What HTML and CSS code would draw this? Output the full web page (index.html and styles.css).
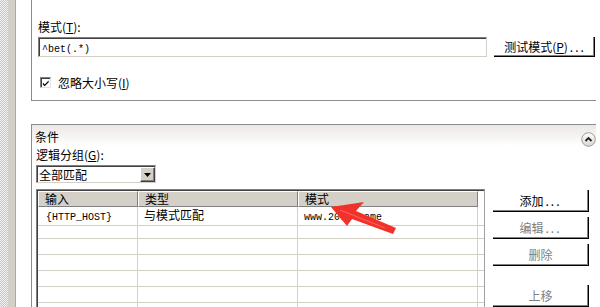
FILE: index.html
```html
<!DOCTYPE html>
<html lang="zh-CN">
<head>
    <meta charset="UTF-8">
    <title>编辑入站规则</title>
    <link rel="stylesheet" href="styles.css">
</head>
<body>
    <div class="screen">
        <div class="rail">
            <div class="checker"></div>
            <div class="bar"></div>
        </div>

        <div class="main">
            <div class="group top-group">
                <div class="label">模式(<u>T</u>):</div>
                <div class="pattern-row">
                    <div class="textbox"><span class="mono">^bet(.*)</span></div>
                    <button class="btn test-btn">测试模式(<u>P</u>)<span class="dots">...</span></button>
                </div>
                <div class="check-row">
                    <span class="checkbox">
                        <svg width="9" height="9" viewBox="0 0 9 9"><path d="M1 3.5 L3 5.5 L7.5 1 L7.5 3 L3 7.5 L1 5.5 Z" fill="#000"/></svg>
                    </span>
                    <span>忽略大小写(<u>I</u>)</span>
                </div>
            </div>

            <div class="group cond-group">
                <div class="group-head">
                    <span>条件</span>
                    <span class="collapse">
                        <svg width="15" height="15" viewBox="0 0 15 15">
                            <defs>
                                <linearGradient id="cg" x1="0" y1="0" x2="0" y2="1">
                                    <stop offset="0" stop-color="#ffffff"/>
                                    <stop offset="1" stop-color="#d8d4cf"/>
                                </linearGradient>
                            </defs>
                            <circle cx="7.5" cy="7.5" r="6.8" fill="url(#cg)" stroke="#a09c98" stroke-width="1"/>
                            <path d="M4.5 9 L7.5 6 L10.5 9" fill="none" stroke="#222" stroke-width="1.8"/>
                        </svg>
                    </span>
                </div>
                <div class="group-body">
                    <div class="label">逻辑分组(<u>G</u>):</div>
                    <div class="select">
                        <span class="select-text">全部匹配</span>
                        <span class="drop">
                            <svg width="7" height="4" viewBox="0 0 7 4"><path d="M0 0 H7 L3.5 4 Z" fill="#000"/></svg>
                        </span>
                    </div>

                    <div class="list-row">
                        <div class="listview">
                            <div class="lv-head">
                                <div class="lv-th">输入</div>
                                <div class="lv-th">类型</div>
                                <div class="lv-th">模式</div>
                                <div class="lv-th blank"></div>
                            </div>
                            <div class="lv-row">
                                <div class="lv-td"><span class="mono">{HTTP_HOST}</span></div>
                                <div class="lv-td">与模式匹配</div>
                                <div class="lv-td"><span class="mono">www.2008.name</span></div>
                                <div class="lv-td"></div>
                            </div>
                            <div class="lv-row"><div class="lv-td"></div><div class="lv-td"></div><div class="lv-td"></div><div class="lv-td"></div></div>
                            <div class="lv-row"><div class="lv-td"></div><div class="lv-td"></div><div class="lv-td"></div><div class="lv-td"></div></div>
                            <div class="lv-row"><div class="lv-td"></div><div class="lv-td"></div><div class="lv-td"></div><div class="lv-td"></div></div>
                            <div class="lv-row"><div class="lv-td"></div><div class="lv-td"></div><div class="lv-td"></div><div class="lv-td"></div></div>
                            <div class="lv-row"><div class="lv-td"></div><div class="lv-td"></div><div class="lv-td"></div><div class="lv-td"></div></div>
                            <div class="lv-row"><div class="lv-td"></div><div class="lv-td"></div><div class="lv-td"></div><div class="lv-td"></div></div>
                        </div>

                        <div class="side-buttons">
                            <button class="btn side-btn">添加<span class="dots">...</span></button>
                            <button class="btn side-btn disabled">编辑<span class="dots">...</span></button>
                            <button class="btn side-btn disabled del">删除</button>
                            <button class="btn side-btn disabled up">上移</button>
                        </div>
                    </div>
                </div>
            </div>
        </div>

        <!-- red annotation arrow -->
        <svg class="arrow" width="600" height="307" viewBox="0 0 600 307">
            <polygon points="331,207 364,202 356,211 396,228 393,234 352,219 347,226" fill="#f2322a"/>
            <path d="M340 210 L385 228" stroke="#ff8a80" stroke-width="1" opacity="0.6"/>
        </svg>
    </div>
</body>
</html>
```

FILE: styles.css
```css
html, body {
    margin: 0;
    padding: 0;
}
body {
    font-family: "Noto Sans CJK SC", "Liberation Sans", sans-serif;
    font-size: 12px;
    line-height: 14px;
    color: #000;
    background: #fff;
}
u {
    text-decoration: underline;
}
.mono {
    font-family: "Liberation Mono", "Noto Sans CJK SC", monospace;
    font-size: 10px;
}
.screen {
    position: relative;
    width: 600px;
    height: 307px;
    overflow: hidden;
    display: flex;
}
.rail {
    display: flex;
    width: 16px;
    flex: none;
}
.checker {
    width: 8px;
    background: repeating-conic-gradient(#c4c4c4 0 25%, #f4f4f4 0 50%) 0 0 / 2px 2px;
}
.bar {
    width: 7px;
    background: #d4d0c8;
    border-right: 1px solid #a8a8a8;
}
.main {
    flex: 1;
    padding: 0 4px 0 15px;
}
.group {
    border-left: 1px solid #8c8c8c;
}

/* top box */
.top-group {
    height: 100px;
    box-sizing: border-box;
    height: 101px;
    border-bottom: 1px solid #8c8c8c;
    padding: 20px 0 0 6px;
}
.pattern-row {
    display: flex;
    gap: 7px;
    margin-top: 3px;
}
.textbox {
    width: 449px;
    height: 20px;
    box-sizing: border-box;
    border-top: 1px solid #808080;
    border-left: 1px solid #808080;
    border-right: 1px solid #d4d0c8;
    border-bottom: 1px solid #d4d0c8;
    box-shadow: inset 1px 1px 0 #404040;
    padding: 2px 0 0 3px;
    line-height: 13px;
}
.btn {
    font-family: "Noto Sans CJK SC", "Liberation Sans", sans-serif;
    font-size: 12px;
    line-height: 14px;
    background: #fff;
    color: #000;
    border: none;
    border-right: 1px solid #000;
    border-bottom: 1px solid #000;
    box-shadow: inset -1px -1px 0 #808080;
    padding: 0;
    margin: 0;
}
.dots {
    letter-spacing: 2px;
    margin-left: 2px;
}
.test-btn {
    width: 101px;
    height: 20px;
    padding-left: 2px;
}
.check-row {
    display: flex;
    align-items: center;
    gap: 7px;
    margin: 20px 0 0 2px;
    height: 11px;
}
.checkbox {
    width: 11px;
    height: 11px;
    box-sizing: border-box;
    border-top: 1px solid #808080;
    border-left: 1px solid #808080;
    border-right: 1px solid #e0e0e0;
    border-bottom: 1px solid #e0e0e0;
    box-shadow: inset 1px 1px 0 #404040;
    display: flex;
    align-items: center;
    justify-content: center;
    padding: 1px 0 0 1px;
}

/* conditions box */
.cond-group {
    margin-top: 23px;
    border-top: 1px solid #8c8c8c;
}
.group-head {
    height: 21px;
    box-sizing: border-box;
    padding: 5px 0 0 3px;
    display: flex;
    justify-content: space-between;
    align-items: flex-start;
    background: linear-gradient(#ebe8e4, #f6f4f2 55%, #ffffff);
}
.collapse {
    margin-top: 2px;
    height: 15px;
}
.group-body {
    padding: 2px 0 0 4px;
}
.select {
    width: 120px;
    height: 18px;
    box-sizing: border-box;
    margin-top: 3px;
    display: flex;
    justify-content: space-between;
    border-top: 1px solid #808080;
    border-left: 1px solid #808080;
    border-right: 1px solid #d4d0c8;
    border-bottom: 1px solid #d4d0c8;
    box-shadow: inset 1px 1px 0 #404040;
    padding: 1px 0 0 2px;
}
.select-text {
    line-height: 15px;
}
.drop {
    width: 15px;
    height: 15px;
    box-sizing: border-box;
    background: #d4d0c8;
    border-top: 1px solid #fff;
    border-left: 1px solid #fff;
    border-right: 1px solid #404040;
    border-bottom: 1px solid #404040;
    box-shadow: inset -1px -1px 0 #808080;
    display: flex;
    align-items: center;
    justify-content: center;
}
.list-row {
    display: flex;
    gap: 8px;
    margin-top: 6px;
}
.listview {
    width: 449px;
    height: 130px;
    box-sizing: border-box;
    border-top: 1px solid #808080;
    border-left: 1px solid #808080;
    border-right: 1px solid #a0a0a0;
    box-shadow: inset 1px 1px 0 #404040;
    padding: 1px 0 0 1px;
}
.lv-head, .lv-row {
    display: grid;
    grid-template-columns: 100px 160px 180px 1fr;
}
.lv-th {
    height: 16px;
    box-sizing: border-box;
    background: #d4d0c8;
    border-top: 1px solid #fff;
    border-left: 1px solid #fff;
    border-right: 1px solid #808080;
    border-bottom: 1px solid #808080;
    padding-left: 6px;
    line-height: 14px;
}
.lv-th.blank {
    background: #fff;
    border: none;
}
.lv-row {
    height: 16px;
}
.lv-td {
    box-sizing: border-box;
    border-right: 1px solid #d4d0c8;
    border-bottom: 1px solid #d4d0c8;
    padding: 1px 0 0 6px;
    line-height: 14px;
}
.lv-td:first-child {
    padding-left: 8px;
}
.lv-td:last-child {
    border-right: none;
}
.side-buttons {
    display: flex;
    flex-direction: column;
    margin-top: 1px;
}
.side-btn {
    width: 96px;
    height: 22px;
    margin-bottom: 5px;
}
.side-btn.disabled {
    color: #808080;
}
.side-btn.del {
    margin-bottom: 19px;
}
.arrow {
    position: absolute;
    left: 0;
    top: 0;
}
```
